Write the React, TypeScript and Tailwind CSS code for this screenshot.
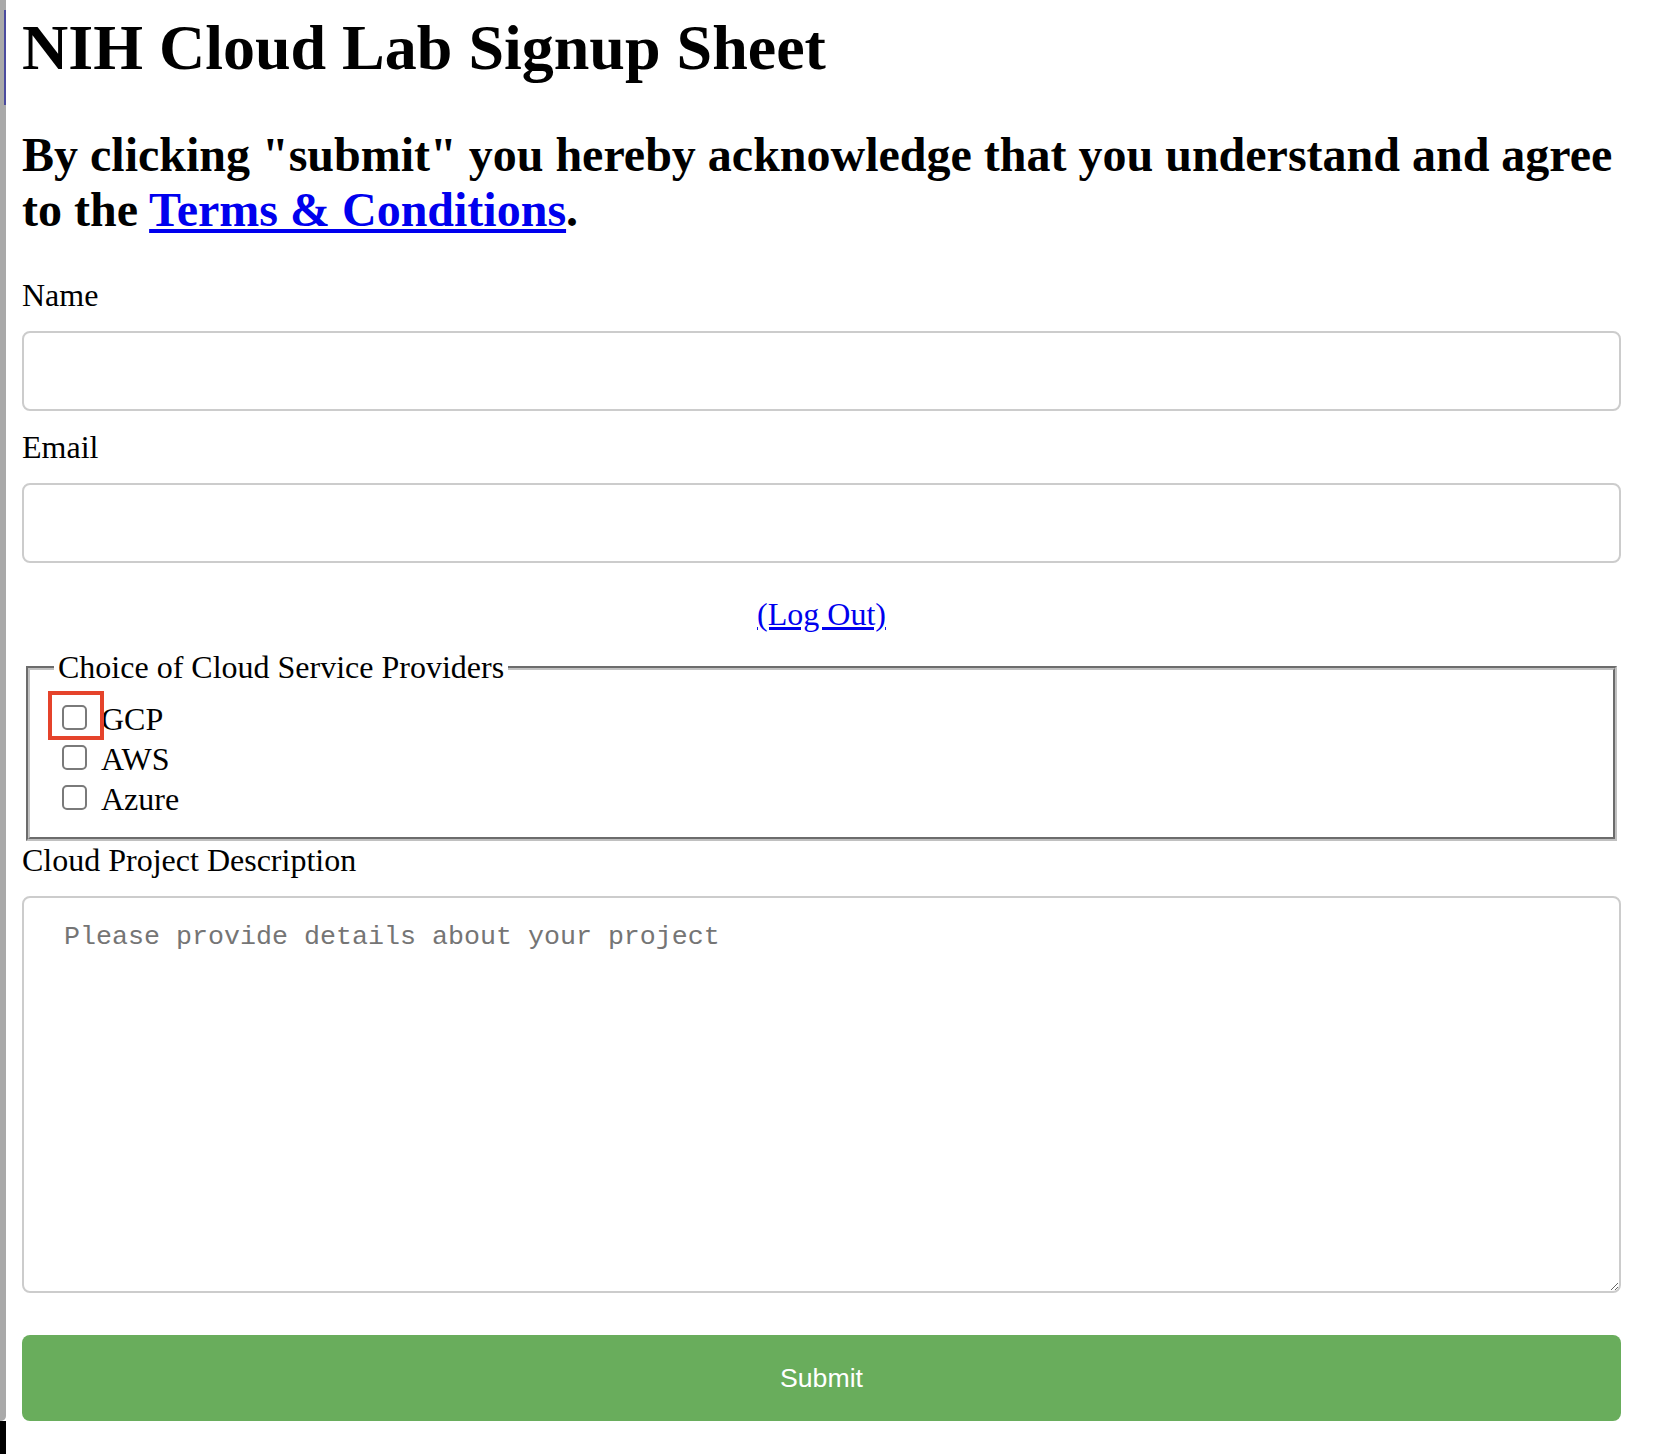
import React from "react";

function Row({ label, highlight }: { label: string; highlight?: boolean }) {
  return (
    <label className="relative flex items-start h-[40px] text-[32px] leading-[40px]">
      <input
        type="checkbox"
        className="appearance-none shrink-0 w-[25px] h-[25px] ml-[8px] mr-[14px] mt-[6px] border-2 border-[#7a7a7a] rounded-[5px] bg-white"
      />
      <span>{label}</span>
      {highlight && (
        <span className="absolute left-[-6px] top-[-8px] w-[56px] h-[49px] border-4 border-[#e5432b] pointer-events-none" />
      )}
    </label>
  );
}

export default function App() {
  return (
    <div className="flex w-[1654px] h-[1454px] bg-white overflow-hidden">
      <div className="w-[6px] shrink-0 flex flex-col">
        <div className="flex-1 bg-[#a9a9a9] rounded-br-[5px] pt-[10px]">
          <div className="ml-[4px] w-[2px] h-[95px] bg-[#4b4b9e]" />
        </div>
        <div className="h-[33px] bg-black" />
      </div>
      <main className="ml-[16px] w-[1599px] shrink-0 pt-[11px] font-['Liberation_Serif','Times_New_Roman',serif] text-black">
        <h1 className="text-[64px] leading-[74px] font-bold">NIH Cloud Lab Signup Sheet</h1>
        <h2 className="mt-[42px] text-[48px] leading-[55px] font-bold">
          By clicking "submit" you hereby acknowledge that you understand and agree to the{" "}
          <a href="#" className="text-[#0000ee] underline">
            Terms &amp; Conditions
          </a>
          .
        </h2>
        <label className="block mt-[40px] text-[32px] leading-[37px]">Name</label>
        <input
          type="text"
          className="block mt-[17px] w-full h-[80px] border-2 border-[#cccccc] rounded-[8px] bg-white"
        />
        <label className="block mt-[18px] text-[32px] leading-[37px]">Email</label>
        <input
          type="email"
          className="block mt-[17px] w-full h-[80px] border-2 border-[#cccccc] rounded-[8px] bg-white"
        />
        <div className="mt-[33px] text-center text-[32px] leading-[37px]">
          <a href="#" className="text-[#0000ee] underline">
            (Log Out)
          </a>
        </div>
        <fieldset className="mt-[16px] mx-[4px] border-4 [border-style:groove] border-[#c0c0c0] px-[24px] pt-[13px] pb-[18px]">
          <legend className="px-[4px] text-[32px] leading-[37px]">Choice of Cloud Service Providers</legend>
          <Row label="GCP" highlight />
          <Row label="AWS" />
          <Row label="Azure" />
        </fieldset>
        <label className="block mt-[1px] text-[32px] leading-[37px]">Cloud Project Description</label>
        <textarea
          placeholder="Please provide details about your project"
          className="block mt-[17px] w-full h-[397px] border-2 border-[#cccccc] rounded-[8px] pl-[40px] pr-[38px] py-[24px] font-['Liberation_Mono','Courier_New',monospace] text-[26.67px] leading-[30px] placeholder:text-[#757575] resize-y bg-white"
        />
        <button
          type="button"
          className="block mt-[42px] w-full h-[86px] rounded-[8px] bg-[#69ad5c] text-white text-[26.67px] font-['Liberation_Sans',Arial,sans-serif]"
        >
          Submit
        </button>
      </main>
    </div>
  );
}
